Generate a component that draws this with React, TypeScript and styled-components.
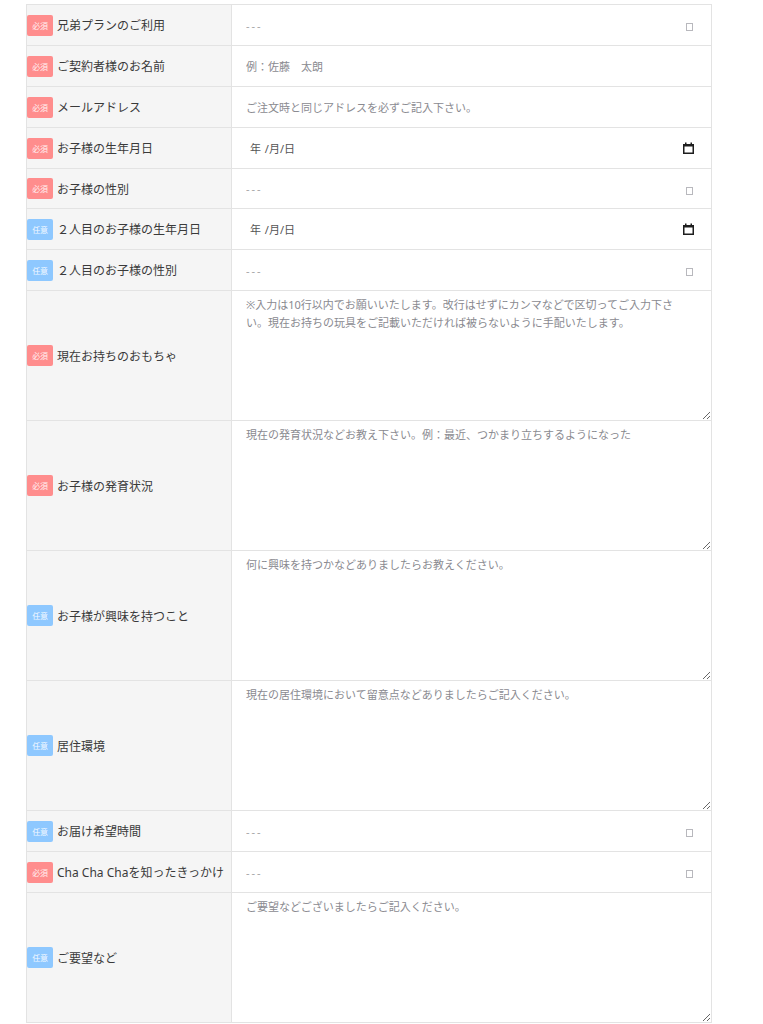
import React from "react";
import styled, { createGlobalStyle } from "styled-components";

const Global = createGlobalStyle`
  html, body { margin: 0; padding: 0; background: #fff; }
  body {
    font-family: "Noto Sans", "Noto Sans CJK JP", sans-serif;
    color: #333;
  }
`;

const Form = styled.div`
  margin: 4px 0 0 26px;
  width: 686px;
  box-sizing: border-box;
  border: 1px solid #e3e3e3;
  border-bottom: none;
`;

const Row = styled.div<{ $height: number }>`
  display: grid;
  grid-template-columns: 205px 1fr;
  height: ${(p) => p.$height}px;
  box-sizing: border-box;
  border-bottom: 1px solid #e3e3e3;
`;

const LabelCell = styled.div`
  display: flex;
  align-items: center;
  gap: 4px;
  background: #f5f5f5;
  border-right: 1px solid #e3e3e3;
  font-size: 12px;
  color: #3a3a3a;
  white-space: nowrap;
`;

const Badge = styled.span<{ $required?: boolean }>`
  flex: none;
  display: inline-flex;
  align-items: center;
  justify-content: center;
  width: 26px;
  height: 21px;
  border-radius: 2px;
  background: ${(p) => (p.$required ? "#ff8d8d" : "#8ec8ff")};
  color: rgba(255, 255, 255, 0.9);
  font-size: 8px;
  letter-spacing: -0.3px;
`;

const ValueCell = styled.div`
  position: relative;
  display: flex;
  align-items: center;
  background: #fff;
  min-width: 0;
`;

const TextInput = styled.input`
  width: 100%;
  height: 100%;
  box-sizing: border-box;
  border: none;
  outline: none;
  background: transparent;
  padding: 0 14px;
  font-family: inherit;
  font-size: 11px;
  color: #333;
  &::placeholder { color: #8a8a90; }
`;

const SelectWrap = styled.div`
  position: relative;
  width: 100%;
  height: 100%;
  &::after {
    content: "";
    position: absolute;
    right: 18px;
    top: 50%;
    width: 5px;
    height: 6px;
    margin-top: -2px;
    border: 1px solid #b8b8bd;
  }
`;

const Select = styled.select`
  appearance: none;
  -webkit-appearance: none;
  width: 100%;
  height: 100%;
  border: none;
  outline: none;
  background: transparent;
  padding: 0 14px;
  font-family: inherit;
  font-size: 11px;
  letter-spacing: 2px;
  color: #a6a6a6;
`;

const DateField = styled.div`
  display: flex;
  align-items: center;
  justify-content: space-between;
  width: 100%;
  height: 100%;
  padding: 0 17px 0 18px;
  box-sizing: border-box;
  font-size: 11px;
  color: #555;
  word-spacing: 1px;
`;

const TextArea = styled.textarea`
  width: 100%;
  height: 100%;
  box-sizing: border-box;
  border: none;
  outline: none;
  background: transparent;
  padding: 5px 28px 4px 14px;
  font-family: inherit;
  font-size: 11px;
  line-height: 18px;
  color: #333;
  &::placeholder { color: #8a8a90; }
`;

const CalendarIcon = () => (
  <svg width="11" height="12" viewBox="0 0 11 12" aria-hidden="true">
    <rect x="0.75" y="2.75" width="9.5" height="8.5" fill="none" stroke="#1e1e1e" strokeWidth="1.5" />
    <rect x="0" y="2" width="11" height="2.5" fill="#1e1e1e" />
    <rect x="2" y="0.5" width="1.5" height="2.5" fill="#1e1e1e" />
    <rect x="7.5" y="0.5" width="1.5" height="2.5" fill="#1e1e1e" />
  </svg>
);

type Field =
  | { kind: "select"; label: string; req: boolean; h?: number }
  | { kind: "text"; label: string; req: boolean; ph: string }
  | { kind: "date"; label: string; req: boolean }
  | { kind: "area"; label: string; req: boolean; ph: string };

const fields: Field[] = [
  { kind: "select", label: "兄弟プランのご利用", req: true },
  { kind: "text", label: "ご契約者様のお名前", req: true, ph: "例：佐藤　太朗" },
  { kind: "text", label: "メールアドレス", req: true, ph: "ご注文時と同じアドレスを必ずご記入下さい。" },
  { kind: "date", label: "お子様の生年月日", req: true },
  { kind: "select", label: "お子様の性別", req: true, h: 40 },
  { kind: "date", label: "２人目のお子様の生年月日", req: false },
  { kind: "select", label: "２人目のお子様の性別", req: false },
  {
    kind: "area",
    label: "現在お持ちのおもちゃ",
    req: true,
    ph: "※入力は10行以内でお願いいたします。改行はせずにカンマなどで区切ってご入力下さい。現在お持ちの玩具をご記載いただければ被らないように手配いたします。",
  },
  { kind: "area", label: "お子様の発育状況", req: true, ph: "現在の発育状況などお教え下さい。例：最近、つかまり立ちするようになった" },
  { kind: "area", label: "お子様が興味を持つこと", req: false, ph: "何に興味を持つかなどありましたらお教えください。" },
  { kind: "area", label: "居住環境", req: false, ph: "現在の居住環境において留意点などありましたらご記入ください。" },
  { kind: "select", label: "お届け希望時間", req: false },
  { kind: "select", label: "Cha Cha Chaを知ったきっかけ", req: true },
  { kind: "area", label: "ご要望など", req: false, ph: "ご要望などございましたらご記入ください。" },
];

const heightOf = (f: Field) => {
  if (f.kind === "area") return 130;
  if (f.kind === "select" && f.h) return f.h;
  return 41;
};

const renderValue = (f: Field) => {
  switch (f.kind) {
    case "select":
      return (
        <SelectWrap>
          <Select defaultValue="">
            <option value="">---</option>
          </Select>
        </SelectWrap>
      );
    case "text":
      return <TextInput type="text" placeholder={f.ph} />;
    case "date":
      return (
        <DateField>
          <span>年 /月/日</span>
          <CalendarIcon />
        </DateField>
      );
    case "area":
      return <TextArea placeholder={f.ph} />;
  }
};

export default function App() {
  return (
    <>
      <Global />
      <Form>
        {fields.map((f, i) => (
          <Row key={i} $height={heightOf(f)}>
            <LabelCell>
              <Badge $required={f.req}>{f.req ? "必須" : "任意"}</Badge>
              <span>{f.label}</span>
            </LabelCell>
            <ValueCell>{renderValue(f)}</ValueCell>
          </Row>
        ))}
      </Form>
    </>
  );
}
